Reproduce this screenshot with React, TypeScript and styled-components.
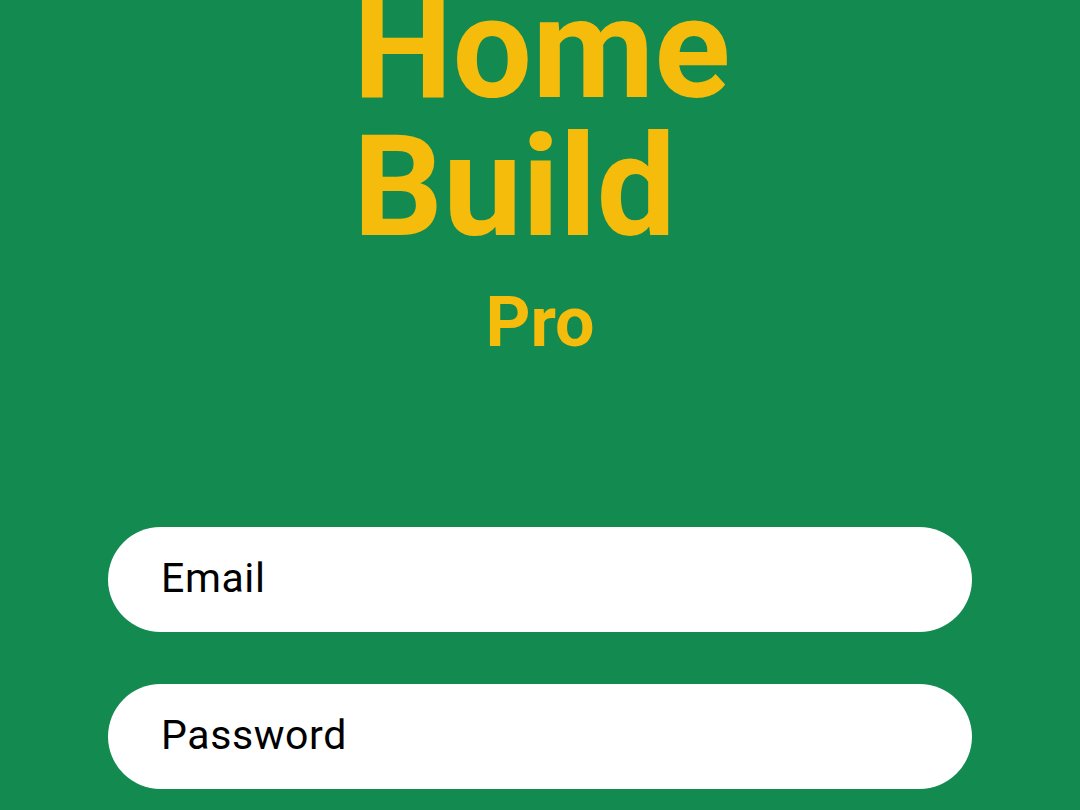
import React from "react";
import styled, { createGlobalStyle } from "styled-components";

const Global = createGlobalStyle`
  html, body { margin: 0; padding: 0; background: #138a50; overflow: hidden; }
  body { font-family: Roboto, "Noto Sans", Arial, sans-serif; }
  * { box-sizing: border-box; }
`;

const Screen = styled.div`
  width: 1080px;
  height: 810px;
  background: #138a50;
  display: flex;
  flex-direction: column;
  align-items: center;
  overflow: hidden;
`;

const Title = styled.h1`
  margin: -20px 0 0 -2px;
  font-family: Roboto, Arial, sans-serif;
  font-weight: 700;
  font-size: 141px;
  line-height: 138px;
  color: #f5bc0c;
  text-align: left;
  width: 372px;
`;

const Sub = styled.h2`
  margin: 0;
  margin-top: 26px;
  font-family: Roboto, Arial, sans-serif;
  font-weight: 700;
  font-size: 70px;
  line-height: 80px;
  color: #f5bc0c;
`;

const Form = styled.form`
  margin-top: 165px;
  width: 864px;
  display: flex;
  flex-direction: column;
  gap: 52px;
`;

const Field = styled.input`
  width: 100%;
  height: 105px;
  border: none;
  outline: none;
  border-radius: 53px;
  background: #ffffff;
  padding: 0 0 4px 53px;
  font-family: Roboto, Arial, sans-serif;
  font-size: 41px;
  letter-spacing: 0.6px;
  color: #000;
  &::placeholder { color: #000; opacity: 1; }
`;

export default function App() {
  return (
    <Screen>
      <Global />
      <Title>Home<br />Build</Title>
      <Sub>Pro</Sub>
      <Form>
        <Field type="email" placeholder="Email" />
        <Field type="password" placeholder="Password" />
      </Form>
    </Screen>
  );
}
